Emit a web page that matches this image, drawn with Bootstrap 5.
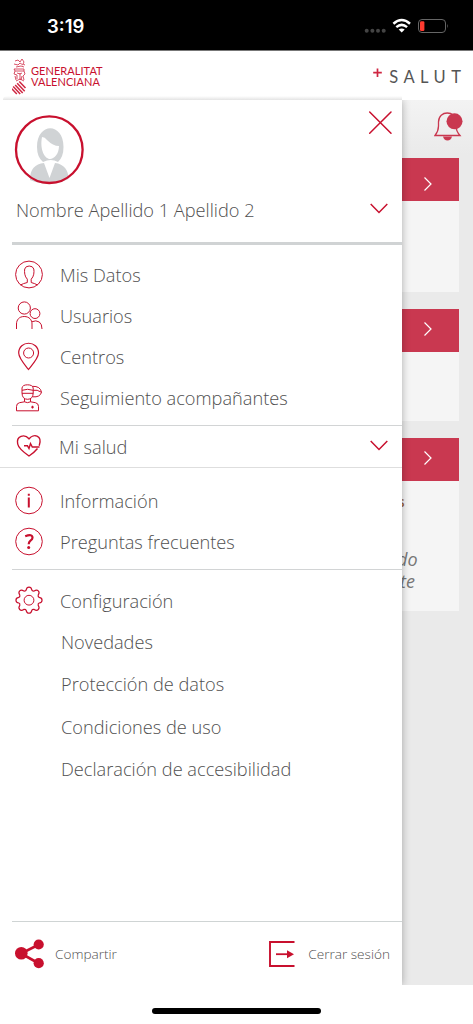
<!DOCTYPE html>
<html lang="es">
<head>
<meta charset="utf-8">
<meta name="viewport" content="width=device-width, initial-scale=1">
<title>Salut</title>
<link href="https://cdn.jsdelivr.net/npm/bootstrap@5.3.0/dist/css/bootstrap.min.css" rel="stylesheet">
<style>
:root{--gva:#c8102e;--soft:#c93850}
body{font-family:"Open Sans",sans-serif;font-weight:300;color:#505050;background:#fff;width:473px;height:1024px;overflow:hidden}
svg{display:block;flex:none}
.status{height:50px;background:#000;color:#fff;padding:3px 24px 0 47px}
.clock{font:600 18.5px/1 Inter,sans-serif}
.brandbar{height:50px;padding:3px 12px 0 12px;border-top:1px solid #777}
.gva-name{font:400 11px/11.5px Lato,sans-serif;color:#c8102e;letter-spacing:.05px}
.salut{font:400 16.5px/1 Lato,sans-serif;color:#555;letter-spacing:5.5px;margin-right:-5.5px}
.stage{height:885px;background:linear-gradient(#f3f3f3,#eaeaea 55px)}
.drawer{width:402px;background:#fff;box-shadow:0 0 8px rgba(0,0,0,.3);z-index:2}
.drawer-edge{height:4px;margin:-4px 71px 0 3px;background:linear-gradient(#fff,#e4e4e4);border-top-left-radius:4px}
.profile{height:145px;margin-left:12px;border-bottom:3px solid #d0d3d4}
.uname{margin-top:6px;font-size:18.2px;line-height:24px;padding-left:4px}
.line-b{border-bottom:1px solid #d2d4d5}
.entry{height:41.2px;font-size:18.2px;line-height:24px;gap:17px;padding-left:3px}
.entry svg{width:28px;height:28px;overflow:visible}
.subentry{height:42.2px;font-size:18.2px;line-height:24px;padding-left:61px}
.ic{fill:none;stroke:var(--gva);stroke-width:1}
.chev{width:18px;margin-right:-2px}
.behind{width:71px;overflow:hidden}
.panel{width:57px;background:#f5f5f5}
.panel-top{height:43px;background:var(--soft);padding:0 0 3px 22px}
.panel-top.first{padding:9px 0 0 22px}
.foot{height:64px;border-top:1px solid #cfd4d4;margin-left:12px;padding:1px 12px 0 3px;font-size:13.6px}
.home{width:169px;height:6px;border-radius:3px;background:#000;margin-top:23px}
.tail-note{font-size:13.5px;line-height:20px;font-weight:600;color:#9c6238;margin:11px 0 0 -4px}
.tail-text{font-size:18px;line-height:21.5px;font-weight:400;color:#777;margin:37px 0 0 -5px}
</style>
</head>
<body>
<div class="status d-flex align-items-center justify-content-between">
  <span class="clock">3:19</span>
  <svg width="85" height="18" viewBox="364 18 85 18">
    <g fill="#444"><circle cx="366.7" cy="30.7" r="2"/><circle cx="372.4" cy="30.7" r="2"/><circle cx="378" cy="30.7" r="2"/><circle cx="383.7" cy="30.7" r="2"/></g>
    <path d="M393.4 23.7Q401.7 16.3 410 23.7M396.3 27.1Q401.7 22.7 407.1 27.1" fill="none" stroke="#fff" stroke-width="2.5"/>
    <path d="M398.7 29.6Q401.7 27.2 404.7 29.6L401.7 32.5Z" fill="#fff"/>
    <rect x="418.5" y="19.5" width="27" height="13" rx="3.5" fill="none" stroke="#666"/><path d="M447 23.8q1.5 2.2 0 4.4z" fill="#666"/>
    <rect x="420" y="21.2" width="4.4" height="9.8" rx="1.3" fill="#ff3b30"/>
  </svg>
</div>
<header class="brandbar d-flex align-items-center justify-content-between">
  <div class="d-flex align-items-center gap-1">
    <svg width="15" height="37" viewBox="0 1 15 37" fill="none" stroke="#cf2742" stroke-width=".8">
      <path d="M3 3l3-1 2 2 2-3 2 3-1 2 2 1M2 6l4 1 2-2 3 2M4 9l5-1 3 1M2 11h10v2H3zM3 13l-1 3 3 1v4M12 13l1 3-2 2 1 4M5 15l3 1 2-1M8 15v7M3 18l1 4M10 18l-1 4M4 23l4-2 4 2"/>
      <path d="M7.300 23.500l6.200 6.500M5.200 25.300l7.500 8M3.200 27l7.500 8M1.200 28.500l7 7.500M-.2 30.800l5 5.200" stroke-width="1.500"/>
    </svg>
    <div class="gva-name" style="margin-top:-2px">GENERALITAT<br>VALENCIANA</div>
  </div>
  <div class="d-flex align-items-center">
    <svg width="16" height="20" viewBox="0 0 16 20"><path d="M4.500 1.500v8.500M.2 5.700h8.600" stroke="#cf2742" stroke-width="1.700"/></svg>
    <span class="salut">SALUT</span>
  </div>
</header>
<div class="drawer-edge"></div>
<main class="stage d-flex overflow-hidden">
  <nav class="drawer d-flex flex-column flex-shrink-0 position-relative">
    <div class="profile d-flex flex-column">
      <div class="d-flex justify-content-between pt-2 pe-2">
        <svg width="76" height="84" viewBox="12 108 76 84">
          <path d="M30 180C30 169 35 164 44 163L49.500 178L55 163C64 164 68.500 170 68.500 179Q50 188 30 180Z" fill="#d0d3d5"/>
          <path d="M43 162Q37 157 37 147C37 122 63.500 122 63.500 147Q63.500 157 58 162Q51 158 43 162Z" fill="#d0d3d5"/>
          <path d="M42 137Q45 137 47 140Q53 146 59 146C59 154 54 159 50 159C45 159 39.500 150 42 137Z" fill="#fff"/>
          <circle cx="49.300" cy="149.700" r="33.300" fill="none" stroke="#c8102e" stroke-width="2.300"/>
        </svg>
        <svg width="26" height="30" viewBox="368 108 26 30"><path d="M369.700 112l21.300 21.300M391 112l-21.300 21.300" fill="none" stroke="#c8102e" stroke-width="1.500" stroke-linecap="round"/></svg>
      </div>
      <div class="uname d-flex align-items-center justify-content-between pe-3">
        <span>Nombre Apellido 1 Apellido 2</span>
        <svg class="chev" height="24" viewBox="0 0 18 24"><path d="M.7 6l8.300 8.500L17.300 6" fill="none" stroke="#c8102e" stroke-width="1.500"/></svg>
      </div>
    </div>
    <div class="line-b" style="height:181px;padding-top:9px;margin-left:12px">
      <div class="entry d-flex align-items-center">
        <svg viewBox="0 0 28 28" class="ic"><circle cx="14" cy="13.500" r="13.400"/><path d="M5.500 24Q8 22.500 12.300 21.500V18.200C9.500 15.500 9.300 11 9.700 8Q10.500 5 14.200 5T18.800 8C19.300 11 19 15.500 16.200 18.200V21.500Q20 22.500 22.500 24"/></svg>
        <span>Mis Datos</span>
      </div>
      <div class="entry d-flex align-items-center">
        <svg viewBox="0 0 28 28" class="ic"><circle cx="9.300" cy="6" r="6.100"/><circle cx="20" cy="11.600" r="4.900"/><path d="M1.500 27V22C1.500 18 4 14.500 9.200 14.500S17 18 17 22V27M16.800 19.800Q21 17.800 24.300 20Q27 22 27 27"/></svg>
        <span>Usuarios</span>
      </div>
      <div class="entry d-flex align-items-center">
        <svg viewBox="0 0 28 28" class="ic"><path d="M13.500 26.500C9.500 21.500 3.700 15 3.700 10C3.700-3 23.500-3 23.500 10C23.500 15 17.500 21.500 13.500 26.500Z" stroke-width="1.200"/><circle cx="13.600" cy="10" r="5"/></svg>
        <span>Centros</span>
      </div>
      <div class="entry d-flex align-items-center">
        <svg viewBox="0 0 28 28" class="ic"><path d="M9.500 14.800V17.800L4.500 18.700Q1.500 19.300 1.500 22.500V26.800H23.500V22.500Q23.500 19.300 20.500 18.700L15.500 17.800V14.800M9.500 17.800Q12.500 19.500 15.500 17.800"/><path d="M7 9V4Q7.500 .8 12.500 .8T18.200 4V9Q18 15.300 12.600 15.300T7 9ZM7 6.300Q12.500 4.300 18.200 6.300M7 9.300H18.200M17.300 2.300Q25.500 2 26.500 8.300Q22 5.300 18.200 6.300M26.500 8.300Q25 13.500 17.800 12.800"/><path d="M17.500 21.800v2.600M16.200 23.100h2.600" stroke-width="1.200"/></svg>
        <span>Seguimiento acompañantes</span>
      </div>
    </div>
    <div class="d-flex align-items-center justify-content-between pe-3" style="height:42px;border-bottom:1.500px solid #dedede;padding-left:12px">
      <div class="entry d-flex align-items-center" style="gap:16px">
        <svg viewBox="0 0 28 28" class="ic"><path d="M24.200 12.800C28 1.500 18 .5 14 5.800C9.500 .5 1 3 2.700 11C3.500 15.500 9 19.500 14 23Q19 19.800 22.500 15.500M9 12.800H12.500L14 15.500L15.500 10.500L17.300 14H24.500" stroke-width="1.400"/></svg>
        <span>Mi salud</span>
      </div>
      <svg class="chev" height="24" viewBox="0 0 18 24"><path d="M.7 6l8.300 8.500L17.300 6" fill="none" stroke="#c8102e" stroke-width="1.500"/></svg>
    </div>
    <div class="line-b" style="height:102px;padding-top:12px;margin-left:12px">
      <div class="entry d-flex align-items-center">
        <svg viewBox="0 0 28 28"><circle cx="14" cy="13.500" r="13.300" class="ic"/><path d="M13.800 10.500V20.500M13.800 6.800V8.800" stroke="#c8102e" stroke-width="2"/></svg>
        <span>Información</span>
      </div>
      <div class="entry d-flex align-items-center">
        <svg viewBox="0 0 28 28"><circle cx="14" cy="13.500" r="13.300" class="ic"/><path d="M10.200 8.300Q17.500 5.500 17.500 9.800Q17.500 11.300 15.500 12.700Q13.700 14 13.700 16.300" fill="none" stroke="#c8102e" stroke-width="2.200"/><circle cx="13.700" cy="19.400" r="1.500" fill="#c8102e"/></svg>
        <span>Preguntas frecuentes</span>
      </div>
    </div>
    <div class="flex-grow-1" style="padding-top:10px">
      <div class="entry d-flex align-items-center" style="margin-left:12px">
        <svg viewBox="0 .8 28 28" class="ic"><path stroke-linejoin="round" d="M11.200 3.800C11.800 0 16.200 0 16.800 3.800Q17.300 5.200 19.200 4.800C22.500 2.500 25.500 5.500 23.200 8.800Q22.800 10.700 24.200 11.200C28 11.800 28 16.200 24.200 16.800Q22.800 17.300 23.200 19.200C25.500 22.500 22.500 25.500 19.200 23.200Q17.300 22.800 16.800 24.200C16.200 28 11.800 28 11.200 24.200Q10.700 22.800 8.800 23.200C5.500 25.500 2.500 22.500 4.800 19.200Q5.200 17.300 3.800 16.800C0 16.200 0 11.800 3.800 11.200Q5.200 10.700 4.800 8.800C2.500 5.500 5.500 2.500 8.800 4.800Q10.700 5.200 11.200 3.800Z" stroke-width="1.200"/><circle cx="14" cy="14" r="4.900"/></svg>
        <span>Configuración</span>
      </div>
      <div class="subentry d-flex align-items-center"><span>Novedades</span></div>
      <div class="subentry d-flex align-items-center"><span>Protección de datos</span></div>
      <div class="subentry d-flex align-items-center"><span>Condiciones de uso</span></div>
      <div class="subentry d-flex align-items-center"><span>Declaración de accesibilidad</span></div>
    </div>
    <div class="foot d-flex align-items-center justify-content-between">
      <div class="d-flex align-items-center" style="gap:11px">
        <svg width="29" height="30" viewBox="15 938.500 29 30" fill="#c8102e"><path d="M39 944L21 953L39 963" fill="none" stroke="#c8102e" stroke-width="2.600"/><circle cx="21.300" cy="952.700" r="6.300"/><circle cx="38.700" cy="944" r="5.100"/><circle cx="38.700" cy="962.700" r="5.100"/></svg>
        <span>Compartir</span>
      </div>
      <div class="d-flex align-items-center" style="gap:13px">
        <svg width="26" height="26" viewBox="0 0 26 26"><path d="M25.500 1H1V25H25.500" fill="none" stroke="#c8102e" stroke-width="1.900"/><path d="M7 13.200H19" stroke="#c8102e" stroke-width="1.800"/><path d="M18 9.200L25 13.200L18 17.200Z" fill="#c8102e"/></svg>
        <span>Cerrar sesión</span>
      </div>
    </div>
  </nav>
  <section class="behind">
    <div class="d-flex align-items-start" style="height:58px;padding:11px 0 0 32px">
      <svg width="30" height="30" viewBox="434 111 30 30"><path d="M435 135.500Q438.500 131 438.500 126V122C438.500 110 456 110 456 122V126Q456 131 460 135.500Z" fill="none" stroke="#c93850" stroke-width="1.300"/><path d="M443 136.500H452Q451 140.500 447.500 140.500T443 136.500Z" fill="#c93850"/><circle cx="454.500" cy="121.300" r="8" fill="#c93850"/></svg>
    </div>
    <div class="panel" style="height:134px;margin-bottom:17px"><div class="panel-top first d-flex align-items-center"><svg width="8" height="14" viewBox="0 0 8 14"><path d="M.5.5L7 7L.5 13.500" fill="none" stroke="#fff" stroke-width="1.200"/></svg></div></div>
    <div class="panel" style="height:112px;margin-bottom:17px"><div class="panel-top d-flex align-items-center"><svg width="8" height="14" viewBox="0 0 8 14"><path d="M.5.5L7 7L.5 13.500" fill="none" stroke="#fff" stroke-width="1.200"/></svg></div></div>
    <div class="panel" style="height:173px">
      <div class="panel-top d-flex align-items-center"><svg width="8" height="14" viewBox="0 0 8 14"><path d="M.5.5L7 7L.5 13.500" fill="none" stroke="#fff" stroke-width="1.200"/></svg></div>
      <div class="tail-note">s</div>
      <div class="tail-text fst-italic">do<br><span style="padding-left:3px">te</span></div>
    </div>
  </section>
</main>
<div class="home mx-auto"></div>
<script src="https://cdn.jsdelivr.net/npm/bootstrap@5.3.0/dist/js/bootstrap.bundle.min.js"></script>
</body>
</html>
